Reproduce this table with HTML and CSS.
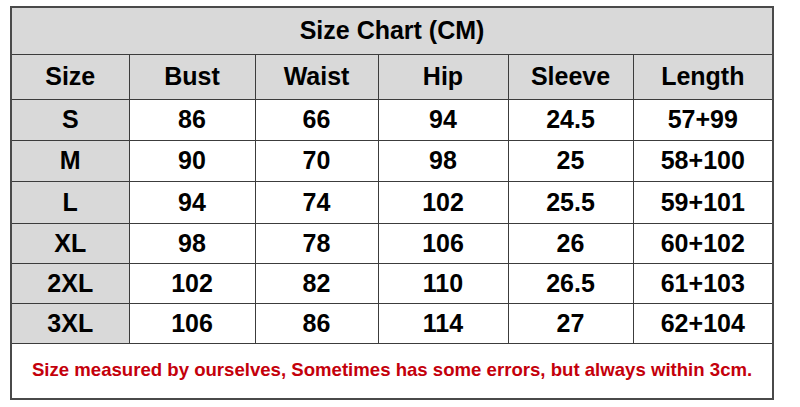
FILE: index.html
```html
<!DOCTYPE html>
<html>
<head>
<meta charset="utf-8">
<link rel="stylesheet" href="styles.css">
</head>
<body>
<table class="chart">
  <colgroup>
    <col class="c1"><col class="c2"><col class="c3"><col class="c4"><col class="c5"><col class="c6">
  </colgroup>
  <tr class="r-title"><th colspan="6" class="gray">Size Chart (CM)</th></tr>
  <tr class="r-head"><th class="gray">Size</th><th class="gray">Bust</th><th class="gray">Waist</th><th class="gray">Hip</th><th class="gray">Sleeve</th><th class="gray">Length</th></tr>
  <tr class="r41"><th class="gray">S</th><td>86</td><td>66</td><td>94</td><td>24.5</td><td>57+99</td></tr>
  <tr class="r41"><th class="gray">M</th><td>90</td><td>70</td><td>98</td><td>25</td><td>58+100</td></tr>
  <tr class="r42"><th class="gray">L</th><td>94</td><td>74</td><td>102</td><td>25.5</td><td>59+101</td></tr>
  <tr class="r40"><th class="gray">XL</th><td>98</td><td>78</td><td>106</td><td>26</td><td>60+102</td></tr>
  <tr class="r40"><th class="gray">2XL</th><td>102</td><td>82</td><td>110</td><td>26.5</td><td>61+103</td></tr>
  <tr class="r40"><th class="gray">3XL</th><td>106</td><td>86</td><td>114</td><td>27</td><td>62+104</td></tr>
  <tr class="r-foot"><td colspan="6" class="note">Size measured by ourselves, Sometimes has some errors, but always within 3cm.</td></tr>
</table>
</body>
</html>
```
FILE: styles.css
```css
html, body {
  margin: 0;
  padding: 0;
  background: #ffffff;
}
body {
  padding: 6px 0 0 10px;
  font-family: "Liberation Sans", Arial, sans-serif;
}
.chart {
  border-collapse: collapse;
  table-layout: fixed;
  width: 762px;
  border: 2px solid #4a4a4a;
}
.c1 { width: 118px; }
.c2 { width: 126px; }
.c3 { width: 123px; }
.c4 { width: 130px; }
.c5 { width: 125px; }
.c6 { width: 140px; }
.chart th, .chart td {
  border: 1.5px solid #3c3c3c;
  padding: 0;
  text-align: center;
  vertical-align: middle;
  font-weight: bold;
  font-size: 25px;
  color: #000;
  line-height: 1;
}
.gray { background: #d9d9d9; }
.r-title { height: 47px; }
.r-head { height: 45px; }
.r41 { height: 41px; }
.r42 { height: 42px; }
.r40 { height: 40px; }
.r-foot { height: 56px; }
.chart td.note {
  color: #c4000b;
  font-size: 18.6px;
  background: #fff;
}
```
